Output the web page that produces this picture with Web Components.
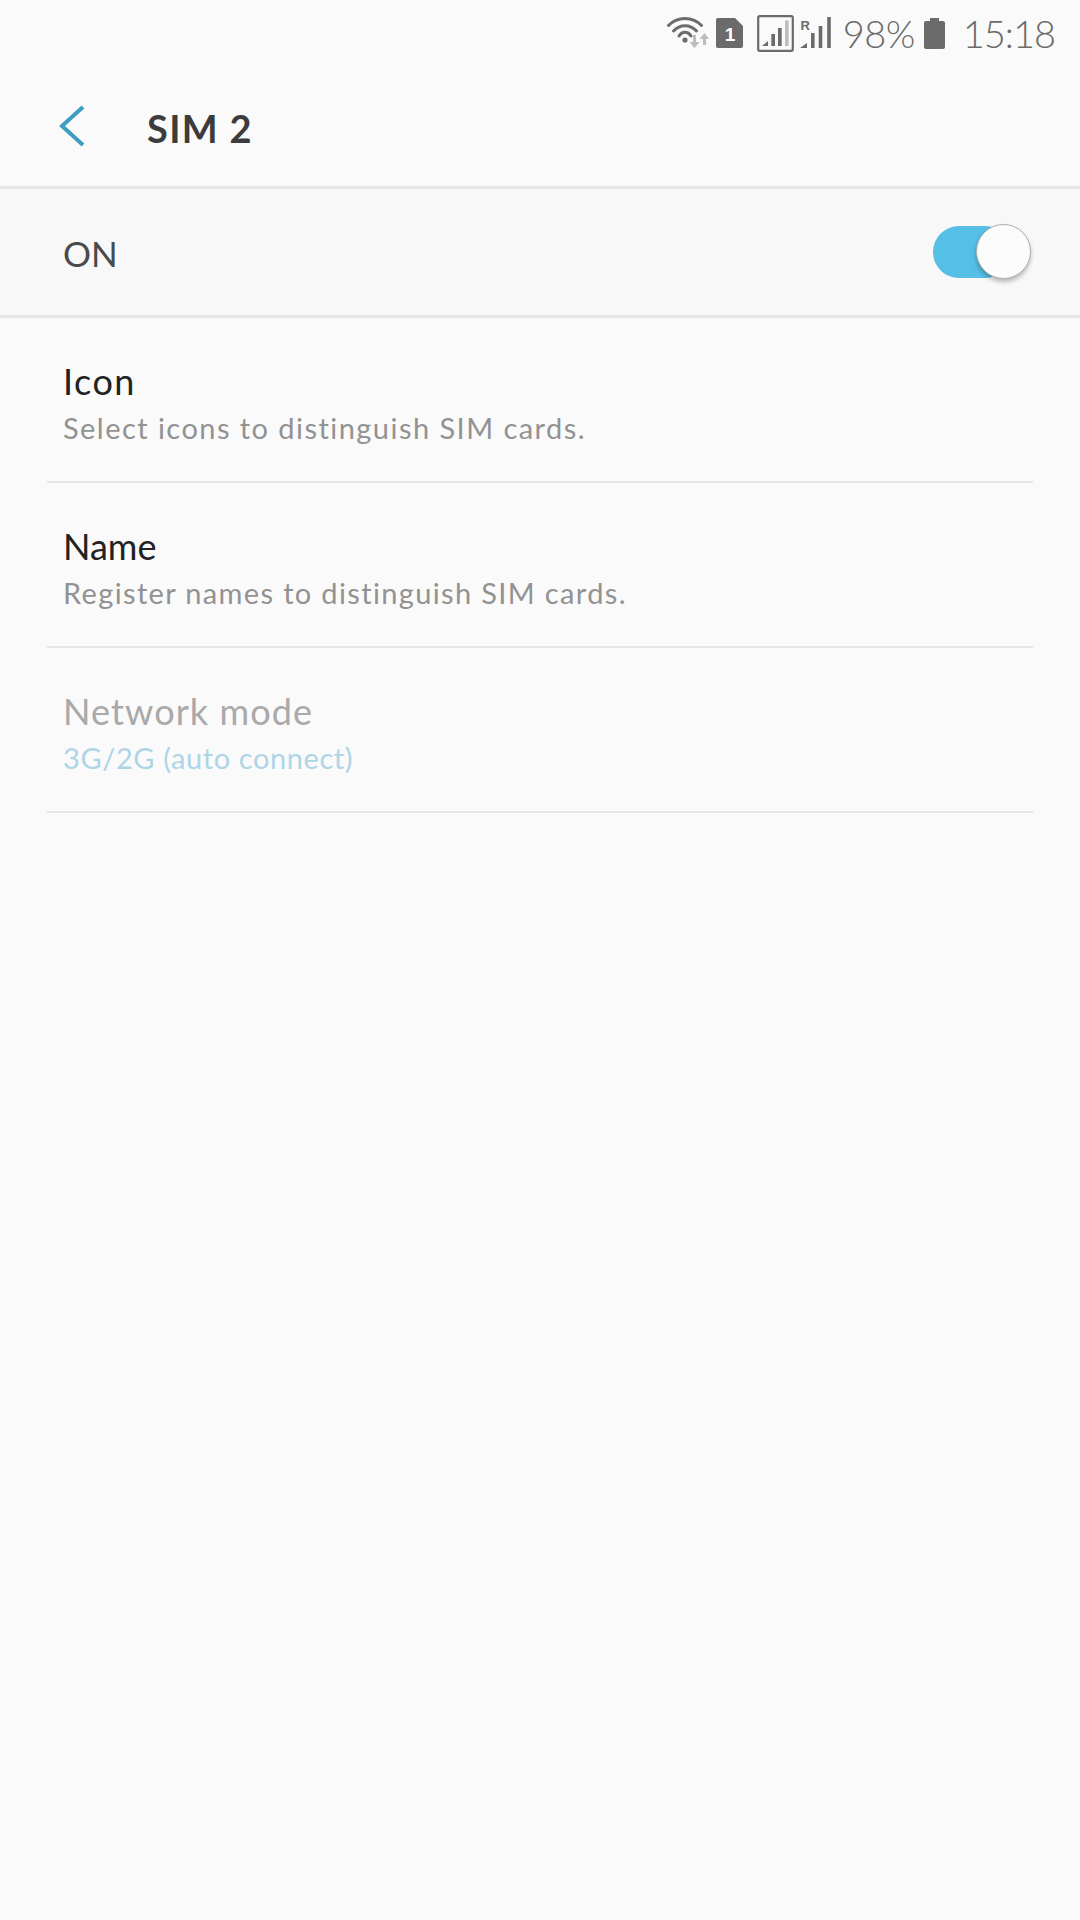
<!DOCTYPE html>
<html>
<head>
<meta charset="utf-8">
<style>
    html, body { margin: 0; padding: 0; background: #fafafa; }
    body { width: 1080px; height: 1920px; overflow: hidden; font-family: "Lato", "Noto Sans", sans-serif; }
</style>
</head>
<body>
<sim-page>
    <status-bar></status-bar>
    <app-header>SIM 2</app-header>
    <master-switch>ON</master-switch>
    <setting-row style="--title-ls:1.5px;--sum-ls:1.45px" title="Icon" summary="Select icons to distinguish SIM cards."></setting-row>
    <setting-row style="--title-ls:0px;--sum-ls:1.35px" title="Name" summary="Register names to distinguish SIM cards."></setting-row>
    <setting-row style="--title-ls:1.1px;--sum-ls:0.6px" title="Network mode" summary="3G/2G (auto connect)" disabled></setting-row>
</sim-page>

<script>
// page wrapper
class SimPage extends HTMLElement {
    constructor() {
        super();
        this.attachShadow({mode: 'open'}).innerHTML = `
            <style>
                :host { display: flex; flex-direction: column; width: 1080px; height: 1920px; background: #fafafa; }
            </style>
            <slot></slot>
        `;
    }
}

// top status bar, icons are inline svg
class StatusBar extends HTMLElement {
    constructor() {
        super();
        this.attachShadow({mode: 'open'}).innerHTML = `
            <style>
                :host { display: flex; justify-content: flex-end; align-items: center; height: 66px; padding-right: 25px; color: #6b6b6b; font-size: 38px; font-weight: 300; }
                svg { display: block; flex: none; }
                .pct { margin: 0 9px 0 12px; letter-spacing: -0.6px; }
                .time { margin-left: 18px; letter-spacing: -1px; }
            </style>
            <svg width="42" height="34" viewBox="0 0 42 34" style="margin-right:7px">
                <g fill="none" stroke="#6b6b6b" stroke-width="3" stroke-linecap="round">
                    <path d="M1.500 9.500 C10 0 26 0 34.500 9.500"/>
                    <path d="M6.500 15 C13 8 23 8 29.500 15"/>
                    <path d="M12 20 C15 15 21 15 24 20"/>
                </g>
                <circle cx="18" cy="24" r="2.6" fill="#6b6b6b"/>
                <path d="M26 19h3v7h3.500l-5 6-5-6H26z" fill="#bdbdbd"/>
                <path d="M36 29h3v-6h3l-4.500-6-5 6H36z" fill="#bdbdbd"/>
            </svg>
            <svg width="28" height="32" viewBox="0 0 28 32" style="margin-right:13px">
                <path d="M2 1h17l8 8v20a2 2 0 0 1-2 2H2a2 2 0 0 1-2-2V3a2 2 0 0 1 2-2z" fill="#6b6b6b"/>
                <text x="14" y="24" font-family="Liberation Sans, sans-serif" font-size="19" font-weight="700" fill="#fff" text-anchor="middle">1</text>
            </svg>
            <svg width="37" height="37" viewBox="0 0 37 37" style="margin-right:6px">
                <rect x="1.200" y="1.200" width="34.600" height="34.600" rx="1.500" fill="none" stroke="#6b6b6b" stroke-width="2.200"/>
                <path d="M5 31l6-5v5z" fill="#6b6b6b"/>
                <rect x="14.300" y="19" width="3.700" height="12" fill="#6b6b6b"/>
                <rect x="21" y="13" width="3.700" height="18" fill="#6b6b6b"/>
                <rect x="28" y="5.500" width="3.700" height="25.500" fill="#bdbdbd"/>
            </svg>
            <svg width="31" height="32" viewBox="0 0 31 32">
                <text x="0.500" y="13" font-family="Liberation Sans, sans-serif" font-size="13" font-weight="700" fill="#6b6b6b">R</text>
                <path d="M0 31l7-5v5z" fill="#6b6b6b"/>
                <rect x="11" y="16" width="3.600" height="15" fill="#6b6b6b"/>
                <rect x="18.700" y="9" width="3.600" height="22" fill="#6b6b6b"/>
                <rect x="27.200" y="0" width="3.600" height="31" fill="#6b6b6b"/>
            </svg>
            <span class="pct">98%</span>
            <svg width="21" height="31" viewBox="0 0 21 31">
                <path d="M6 0h9v3h4a2 2 0 0 1 2 2v24a2 2 0 0 1-2 2H2a2 2 0 0 1-2-2V5a2 2 0 0 1 2-2h4z" fill="#6b6b6b"/>
            </svg>
            <span class="time">15:18</span>
        `;
    }
}

// title bar with back arrow
class AppHeader extends HTMLElement {
    constructor() {
        super();
        this.attachShadow({mode: 'open'}).innerHTML = `
            <style>
                :host { display: flex; align-items: center; box-sizing: border-box; height: 123px; padding: 0 0 0 58px; border-bottom: 3px solid #e6e6e6; color: #3c3c3c; font-size: 38px; font-weight: 700; letter-spacing: 1.3px; }
                svg { display: block; margin-right: 61px; }
                .label { padding-top: 4px; }
            </style>
            <svg width="28" height="44" viewBox="0 0 28 44">
                <path d="M25 3 L4 22 L25 41" fill="none" stroke="#3f9dc2" stroke-width="4"/>
            </svg>
            <div class="label"><slot></slot></div>
        `;
    }
}

// the master on/off band
class MasterSwitch extends HTMLElement {
    constructor() {
        super();
        this.attachShadow({mode: 'open'}).innerHTML = `
            <style>
                :host { display: flex; align-items: center; justify-content: space-between; box-sizing: border-box; height: 129px; padding: 0 49px 0 63px; background: #f8f8f8; border-bottom: 3px solid #e6e6e6; color: #4a4a4a; font-size: 35px; }
                .label { padding-top: 2px; }
                .track { position: relative; width: 78px; height: 52px; border-radius: 26px; background: #55bfe6; margin-right: 20px; }
                .thumb { position: absolute; left: 43px; top: -2px; box-sizing: border-box; width: 55px; height: 55px; border-radius: 50%; background: #fcfcfc; border: 1px solid #adadad; box-shadow: 0 3px 4px rgba(0,0,0,.25); }
            </style>
            <div class="label"><slot></slot></div>
            <div class="track"><div class="thumb"></div></div>
        `;
    }
}

// one settings row, title + summary + divider
class SettingRow extends HTMLElement {
    constructor() {
        super();
        this.attachShadow({mode: 'open'}).innerHTML = `
            <style>
                :host { display: block; margin: 0 47px; }
                .row { box-sizing: border-box; height: 165px; padding: 41px 16px 0; border-bottom: 2px solid #e6e6e6; }
                .title { color: #222; font-size: 36px; line-height: 44px; letter-spacing: var(--title-ls, 0); }
                .summary { color: #929292; font-size: 29px; line-height: 36px; margin-top: 7px; letter-spacing: var(--sum-ls, 1px); white-space: nowrap; }
                :host([disabled]) .title { color: #a9a9a9; }
                :host([disabled]) .summary { color: #aed5e6; }
            </style>
            <div class="row">
                <div class="title"></div>
                <div class="summary"></div>
            </div>
        `;
    }

    connectedCallback() {
        this.shadowRoot.querySelector('.title').textContent = this.getAttribute('title');
        this.shadowRoot.querySelector('.summary').textContent = this.getAttribute('summary');
    }
}

customElements.define('sim-page', SimPage);
customElements.define('status-bar', StatusBar);
customElements.define('app-header', AppHeader);
customElements.define('master-switch', MasterSwitch);
customElements.define('setting-row', SettingRow);
</script>
</body>
</html>
